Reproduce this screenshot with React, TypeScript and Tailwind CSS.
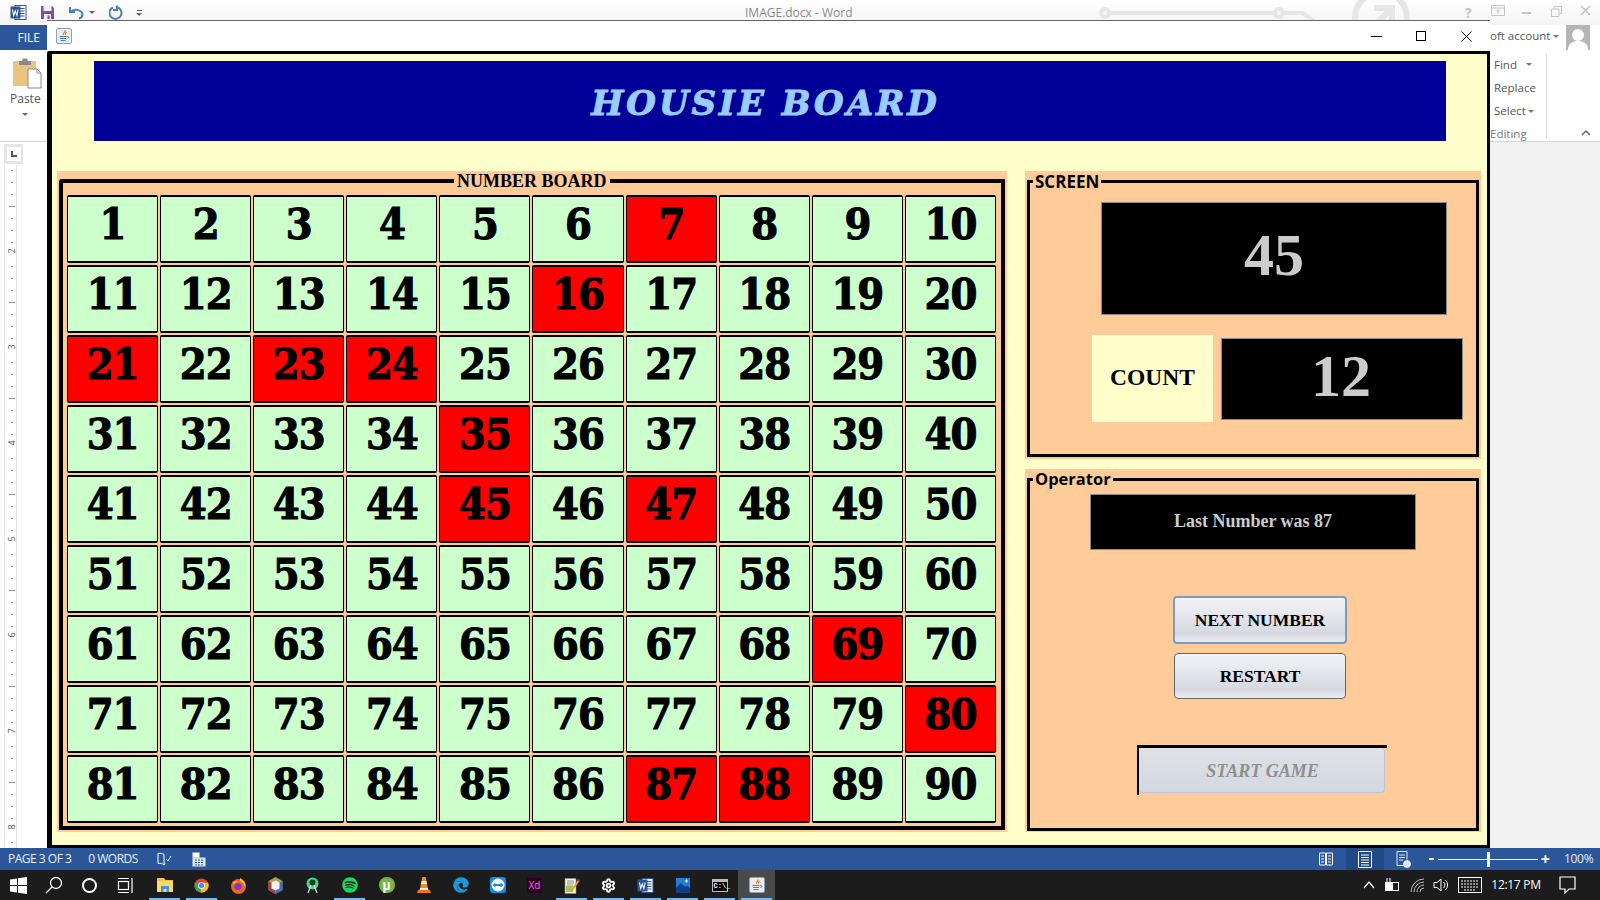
import React from 'react';
import { FaSpotify, FaEdge } from 'react-icons/fa';
import { Settings } from 'lucide-react';

const SERIF = "font-['Liberation_Serif',serif]";
const UI = "font-['Open_Sans','Noto_Sans',sans-serif]";

// numbers already called in the game
const called = [7, 16, 21, 23, 24, 35, 45, 47, 69, 80, 87, 88];
const numbers = Array.from({ length: 90 }, (_, i) => i + 1);

const WordIcon: React.FC<{ size?: number }> = ({ size = 17 }) => (
  <svg width={size} height={size} viewBox="0 0 17 17">
    <rect x="5" y="1.5" width="11" height="14" fill="#fff" stroke="#2b579a" />
    <path d="M10 4.5h4.5M10 7h4.5M10 9.5h4.5M10 12h4.5" stroke="#2b579a" />
    <rect x="0.5" y="2.5" width="10" height="12" fill="#2b579a" />
    <path d="M2.5 5.5l1.2 6 1.6-4.5 1.6 4.5 1.2-6" fill="none" stroke="#fff" strokeWidth="1.1" />
  </svg>
);

const JavaIcon: React.FC = () => (
  <svg width="16" height="16" viewBox="0 0 16 16">
    <rect x="0.5" y="0.5" width="15" height="15" rx="1.5" fill="#e9eef3" stroke="#8fa3b5" />
    <path d="M9 2.5c1 1.5-2.5 2.5-1.5 4.5M10.5 4c-1.2 1-1.5 1.8-1 3" fill="none" stroke="#e76f00" strokeWidth="1.1" />
    <path d="M3.5 8.5h7M4 10.5h6M4.5 12.5h5" stroke="#4f7fa3" strokeWidth="1.1" />
    <path d="M11 8.5c2-.5 2.5 1.5.5 2" fill="none" stroke="#4f7fa3" />
  </svg>
);

const TitleDecor: React.FC = () => (
  <svg className="absolute left-[1096px] top-0" width="400" height="25" viewBox="0 0 400 25">
    <g fill="none" stroke="#e6e6e6" strokeWidth="4">
      <circle cx="9" cy="13" r="4" />
      <path d="M13 13h166" />
      <circle cx="183" cy="13" r="4" />
      <path d="M187 13h20l16 12" />
      <circle cx="285" cy="18" r="26" strokeWidth="6" />
      <path d="M272 32l24-24M278 8h18v18" strokeWidth="6" />
    </g>
  </svg>
);

const QuickAccess: React.FC = () => (
  <div className="flex items-center h-full pl-[10px]">
    <WordIcon />
    <svg className="ml-[13px]" width="15" height="15" viewBox="0 0 15 15">
      <path d="M1 1h11l2 2v11H1z" fill="#7d4f9e" />
      <rect x="3.5" y="1" width="8" height="5" fill="#f3eef7" />
      <rect x="4" y="9" width="7" height="5" fill="#f3eef7" />
      <rect x="7.5" y="10.5" width="2" height="3.5" fill="#7d4f9e" />
    </svg>
    <svg className="ml-[13px]" width="17" height="15" viewBox="0 0 17 15">
      <path d="M2 2v5h5M2.5 7c3-3.5 11-3 12 2.5 0 2-1.5 3.500-3.500 4" fill="none" stroke="#4a7fb5" strokeWidth="2" />
    </svg>
    <span className="ml-[4px] w-0 h-0 border-x-[3px] border-x-transparent border-t-[3px] border-t-[#666]" />
    <svg className="ml-[14px]" width="14" height="15" viewBox="0 0 14 15">
      <path d="M4 2.500a6 6 0 1 0 5 0M8 .5v4.500h-4" fill="none" stroke="#4a7fb5" strokeWidth="2" />
    </svg>
    <span className="ml-[13px] flex flex-col items-center gap-[2px]">
      <span className="w-[5px] h-px bg-[#666]" />
      <span className="w-0 h-0 border-x-[3px] border-x-transparent border-t-[3px] border-t-[#666]" />
    </span>
  </div>
);

const Ruler: React.FC = () => {
  const ticks = Array.from({ length: 57 }, (_, i) => 170 + i * 12).filter((y) => (y - 158) % 96 !== 0);
  return (
    <svg width="24" height="706" viewBox="0 142 24 706" className="absolute left-0 top-0">
      <path d="M4.500 165V848M16.500 165V848" stroke="#e4e4e4" />
      {ticks.map((y) => (
        <rect key={y} x={(y - 158) % 48 === 0 ? 9 : 11} y={y} width={(y - 158) % 48 === 0 ? 6 : 2} height="1" fill="#8a8a8a" />
      ))}
      {[2, 3, 4, 5, 6, 7, 8].map((n) => (
        <text key={n} x="12" y={62 + n * 96} fontSize="9" fill="#555" textAnchor="middle" fontFamily="Open Sans" transform={`rotate(-90 12 ${59 + n * 96})`}>
          {n}
        </text>
      ))}
    </svg>
  );
};

const Legend: React.FC<{ className: string; children: React.ReactNode }> = ({ className, children }) => (
  <span className={`absolute bg-[#FFCC99] text-black font-bold leading-none ${className}`}>{children}</span>
);

const NumberCell: React.FC<{ n: number }> = ({ n }) => (
  <div
    className={`h-[68px] flex items-center justify-center pb-[9px] border border-t-2 border-b-2 border-black rounded-[2px] text-[43px] font-bold leading-none text-black [font-stretch:condensed] tracking-[-1px] [-webkit-text-stroke:1px_#000] font-['DejaVu_Serif',serif] ${
      called.includes(n) ? 'bg-[#FF0000]' : 'bg-[#CCFFCC]'
    }`}
  >
    {n}
  </div>
);

const ChromeButton: React.FC<{ className: string; children: React.ReactNode }> = ({ className, children }) => (
  <div
    className={`flex items-center justify-center rounded-[4px] bg-gradient-to-b from-[#f3f4f7] via-[#d6d9e1] via-80% to-[#e9ebef] text-[17.5px] font-bold text-black ${SERIF} ${className}`}
  >
    {children}
  </div>
);

const ExplorerIcon = () => (
  <svg width="18" height="16" viewBox="0 0 18 16">
    <path d="M1 1h7l1.500 2H17v12H1z" fill="#f0c24a" />
    <path d="M1 4h16v11H1z" fill="#ffd968" />
    <path d="M5 9h8v6h-2.500v-3h-3v3H5z" fill="#3f9be0" />
  </svg>
);

const ChromeIcon = () => (
  <svg width="15" height="15" viewBox="0 0 16 16">
    <circle cx="8" cy="8" r="7.500" fill="#d9483b" />
    <path d="M8 8L1.300 4.500A7.500 7.500 0 0 0 7 15.400z" fill="#3aa757" />
    <path d="M8 5h7a7.500 7.500 0 0 1-8 10.400z" fill="#f4c20d" />
    <circle cx="8" cy="8" r="3.600" fill="#fff" />
    <circle cx="8" cy="8" r="2.700" fill="#4285f4" />
  </svg>
);

const FirefoxIcon = () => (
  <svg width="17" height="17" viewBox="0 0 17 17">
    <circle cx="8.500" cy="9.500" r="7.500" fill="#f2651f" />
    <path d="M10 1c4 2 6 5 5 9-1-4-3-5-5-6z" fill="#ffbd2e" />
    <circle cx="8" cy="9.500" r="3.600" fill="#7a3bc4" />
    <path d="M2 6c2-2 4-2 6-1-2 0-3 1-3 2z" fill="#ffa436" />
  </svg>
);

const HexIcon = () => (
  <svg width="15" height="17" viewBox="0 0 15 17">
    <path d="M7.500 0L14.500 4v9l-7 4-7-4V4z" fill="#b0a04a" />
    <path d="M14.500 4v9l-7 4V8.500z" fill="#3f6fc0" />
    <path d="M.5 4v9l7 4V8.500z" fill="#a83a5a" />
    <path d="M3.500 5.500l4-2 4 2v6l-4 2-4-2z" fill="#f2f2f2" />
  </svg>
);

const AndroidStudioIcon = () => (
  <svg width="13" height="17" viewBox="0 0 13 17">
    <circle cx="6.500" cy="6.500" r="6" fill="#3ddc84" />
    <circle cx="6.500" cy="5.500" r="3" fill="#0b3d2a" />
    <path d="M5 8L2 16M8 8l3 8" stroke="#e8e8e8" strokeWidth="1.200" />
  </svg>
);

const TorrentIcon = () => (
  <div className="w-[16px] h-[16px] rounded-full bg-[#76b83f] flex items-center justify-center text-white text-[14px] font-bold leading-none font-['Liberation_Sans',sans-serif]">µ</div>
);

const VlcIcon = () => (
  <svg width="14" height="16" viewBox="0 0 14 16">
    <path d="M5.500 0h3l1 4h-5z" fill="#f28c1e" />
    <path d="M4.500 4h5l.6 3H3.900z" fill="#eee" />
    <path d="M3.900 7h6.200l.8 4H3.100z" fill="#f28c1e" />
    <path d="M3.100 11h7.800l.6 2h-9z" fill="#eee" />
    <path d="M1 13h12l1 3H0z" fill="#e8771a" />
  </svg>
);

const TeamViewerIcon = () => (
  <svg width="16" height="16" viewBox="0 0 16 16">
    <rect width="16" height="16" rx="3" fill="#0e8ee9" />
    <circle cx="8" cy="8" r="6.500" fill="#fff" />
    <path d="M2.500 8l3-2.500V7h5V5.500l3 2.500-3 2.500V9h-5v1.500z" fill="#0e8ee9" />
  </svg>
);

const XdIcon = () => (
  <div className={`w-[15px] h-[15px] bg-[#2e001f] flex items-center justify-center text-[#ff61f6] text-[10px] leading-none ${UI}`}>Xd</div>
);

const NotepadIcon = () => (
  <svg width="16" height="17" viewBox="0 0 16 17">
    <path d="M1 1.500h11v15H1z" fill="#f5f5e6" stroke="#888" strokeWidth="0.6" />
    <path d="M3 4h7M3 6h7M3 8h6" stroke="#666" strokeWidth="0.7" />
    <path d="M2 9h7v6H2z" fill="#9ccc4d" />
    <path d="M6 14L14 3l1.500 1L8 15z" fill="#f0a030" />
    <path d="M14 2l2 1-1 1.500-1.500-1z" fill="#c0303a" />
  </svg>
);

const PhotosIcon = () => (
  <svg width="14" height="15" viewBox="0 0 14 15">
    <rect width="14" height="15" fill="#1f7fd8" />
    <path d="M0 15V10l5-5 4 4 2-1.500 3 3V15z" fill="#0d3f8c" />
    <path d="M10.500 1.500v3M9 3h3" stroke="#fff" />
  </svg>
);

const CmdIcon = () => (
  <div className="w-[16px] h-[13px] border border-[#bbb] bg-black flex flex-col">
    <span className="h-[2px] bg-[#bbb]" />
    <span className="text-white text-[7px] leading-[9px] font-bold font-['Liberation_Mono',monospace] pl-px">C:\_</span>
  </div>
);

// task buttons sit on a 37px pitch
const taskIcons: { key: string; node: React.ReactNode; bar?: boolean }[] = [
  { key: 'explorer', node: <ExplorerIcon />, bar: true },
  { key: 'chrome', node: <ChromeIcon />, bar: true },
  { key: 'firefox', node: <FirefoxIcon /> },
  { key: 'hex', node: <HexIcon /> },
  { key: 'studio', node: <AndroidStudioIcon /> },
  { key: 'spotify', node: <FaSpotify size={16} color="#1ed760" />, bar: true },
  { key: 'torrent', node: <TorrentIcon /> },
  { key: 'vlc', node: <VlcIcon /> },
  { key: 'edge', node: <FaEdge size={16} color="#1a9ad6" /> },
  { key: 'teamviewer', node: <TeamViewerIcon /> },
  { key: 'xd', node: <XdIcon /> },
  { key: 'notepad', node: <NotepadIcon />, bar: true },
  { key: 'gear', node: <Settings size={15} color="#fff" strokeWidth={3} />, bar: true },
  { key: 'word', node: <WordIcon />, bar: true },
  { key: 'photos', node: <PhotosIcon />, bar: true },
  { key: 'cmd', node: <CmdIcon />, bar: true },
  { key: 'java', node: <JavaIcon />, bar: true },
];

const Taskbar: React.FC = () => (
  <div className="h-[30px] bg-[#1c1c1c] flex items-center text-white">
    <div className="w-[36px] flex justify-center">
      <svg width="17" height="17" viewBox="0 0 17 17" fill="#fff">
        <path d="M0 2.500l7-1v6.500H0zM8 1.300L17 0v8H8zM0 9h7v6.500l-7-1zM8 9h9v8l-9-1.300z" />
      </svg>
    </div>
    <div className="w-[36px] flex justify-center">
      <svg width="18" height="18" viewBox="0 0 18 18" fill="none" stroke="#fff" strokeWidth="1.300">
        <circle cx="11" cy="7" r="5.500" />
        <path d="M7 11l-6 6" />
      </svg>
    </div>
    <div className="w-[35px] flex justify-center">
      <span className="w-[15px] h-[15px] rounded-full border-2 border-white" />
    </div>
    <div className="w-[36px] flex justify-center">
      <svg width="17" height="17" viewBox="0 0 17 17" fill="none" stroke="#fff" strokeWidth="1.200">
        <rect x="1.500" y="4.500" width="10" height="8" />
        <path d="M1 1.500h11M1 15.500h11M15 1v15" />
      </svg>
    </div>
    <div className="flex ml-[3px] h-full">
      {taskIcons.map((t) => (
        <div key={t.key} className={`relative w-[37px] flex items-center justify-center ${t.key === 'java' ? 'bg-[#4a4a4a]' : ''}`}>
          {t.node}
          {t.bar && <span className="absolute left-[3px] right-[3px] bottom-0 h-[2px] bg-[#76b9ed]" />}
        </div>
      ))}
    </div>
    <div className="ml-auto flex items-center h-full">
      <svg width="12" height="8" viewBox="0 0 12 8" fill="none" stroke="#fff" strokeWidth="1.200" className="mr-[9px]">
        <path d="M1 7l5-6 5 6" />
      </svg>
      <svg width="16" height="14" viewBox="0 0 16 14" fill="none" stroke="#fff" className="mr-[10px]">
        <rect x="1.500" y="4.500" width="13" height="8" />
        <rect x="1.500" y="4.500" width="7" height="8" fill="#fff" />
        <path d="M3 0v4M6 0v4" />
      </svg>
      <svg width="15" height="15" viewBox="0 0 15 15" fill="none" stroke="#bbb" className="mr-[8px]">
        <path d="M1 14A13 13 0 0 1 14 1M4 14A10 10 0 0 1 14 4M7 14a7 7 0 0 1 7-7M10 14a4 4 0 0 1 4-4" />
      </svg>
      <svg width="16" height="16" viewBox="0 0 16 16" fill="none" stroke="#fff" className="mr-[9px]">
        <path d="M1 5.500h3l4-3.500v12l-4-3.500H1zM10.500 5a4 4 0 0 1 0 6M12.500 3a7 7 0 0 1 0 10" />
      </svg>
      <svg width="24" height="16" viewBox="0 0 24 16" fill="none" stroke="#fff" className="mr-[9px]">
        <rect x="0.500" y="0.500" width="23" height="15" />
        <path d="M3 4h18M3 7h18M3 10h18M6 13h12" strokeDasharray="2 1" />
      </svg>
      <span className={`text-[12px] tracking-[-0.3px] w-[50px] text-center whitespace-nowrap ${UI}`}>12:17 PM</span>
      <svg width="17" height="18" viewBox="0 0 17 18" fill="none" stroke="#fff" strokeWidth="1.200" className="ml-[18px] mr-[24px]">
        <path d="M1 1h15v12h-6l-4 4v-4H1z" />
      </svg>
    </div>
  </div>
);

const StatusBar: React.FC = () => (
  <div className={`h-[22px] bg-[#2B579A] flex items-center text-[12px] text-[#e8edf5] ${UI}`}>
    <span className="ml-[8px] tracking-[-0.5px]">PAGE 3 OF 3</span>
    <span className="ml-[17px] tracking-[-0.5px]">0 WORDS</span>
    <svg className="ml-[19px]" width="15" height="15" viewBox="0 0 15 15" fill="none" stroke="#fff">
      <path d="M7 2.500C5.500 1.500 3 1 1 1.500v10c2-.5 4.500 0 6 1.500zM7 13l1-1.500M9 7l2 2 3-5" />
    </svg>
    <svg className="ml-[20px]" width="14" height="15" viewBox="0 0 14 15">
      <rect x="0.500" y="5.500" width="13" height="9" fill="#dfe6f1" />
      <rect x="0.500" y="0.500" width="7" height="5" fill="#fff" />
      <path d="M3 8h8M3 10.500h8M3 13h8" stroke="#2B579A" strokeDasharray="2 1" />
    </svg>
    <div className="ml-auto flex items-center h-full">
      <svg width="16" height="15" viewBox="0 0 16 15" fill="none" stroke="#fff">
        <path d="M1.500 1h6v12h-6zM8.500 1h6v12h-6zM3 4h3M3 7h3M3 10h3M10 4h3M10 7h3M10 10h3" />
      </svg>
      <div className="ml-[12px] w-[38px] h-full bg-[#1f4a85] flex items-center justify-center">
        <svg width="14" height="17" viewBox="0 0 14 17" fill="none" stroke="#fff">
          <path d="M.5.500h13v16H.5zM3 4h8M3 6.500h8M3 9h8M3 11.500h8M3 14h8" />
        </svg>
      </div>
      <svg className="ml-[12px]" width="15" height="17" viewBox="0 0 15 17" fill="none" stroke="#dfe6f1">
        <path d="M8 14.500H1V.500h10v8M3 4h6M3 6.500h6M3 9h4" />
        <circle cx="11" cy="13" r="3.500" fill="#dfe6f1" />
      </svg>
      <span className="ml-[18px] w-[5px] h-[2px] bg-white" />
      <div className="relative ml-[4px] w-[100px] h-px bg-white">
        <span className="absolute left-[49px] -top-[7px] w-[3px] h-[15px] bg-white" />
      </div>
      <span className="ml-[3px] text-[16px] leading-none font-bold text-white">+</span>
      <span className="ml-[14px] mr-[8px] w-[28px] tracking-[-0.3px]">100%</span>
    </div>
  </div>
);

const HousieWindow: React.FC = () => (
  <div className="absolute left-[47px] top-[20px] w-[1443px] h-[828px] flex flex-col bg-white border-t border-[#666]">
    <div className="h-[30px] shrink-0 flex items-center">
      <div className="ml-[9px]">
        <JavaIcon />
      </div>
      <div className="ml-auto flex items-center">
        <span className="w-[11px] h-px bg-black" />
        <span className="ml-[34px] w-[10px] h-[10px] border border-black" />
        <svg className="ml-[35px] mr-[18px]" width="11" height="11" viewBox="0 0 11 11" stroke="#000" strokeWidth="1">
          <path d="M.5.500l10 10M10.500.500l-10 10" />
        </svg>
      </div>
    </div>
    <div className="flex-1 min-h-0 border-[3px] border-l-[5px] border-black rounded-tl-[2px] bg-[#FFFFCC] flex flex-col">
      <div className="mt-[7px] ml-[42px] w-[1352px] h-[80px] shrink-0 bg-[#000099] flex items-center justify-center pr-[9px] pt-[3px]">
        <span className="text-[#99CCFF] text-[34px] font-bold italic tracking-[3px] leading-none whitespace-nowrap font-['DejaVu_Serif',serif] [-webkit-text-stroke:1px_#99CCFF]">
          HOUSIE BOARD
        </span>
      </div>
      <div className="mt-[30px] ml-[5px] flex gap-[18px]">
        {/* number board */}
        <div className="w-[950px] h-[661px] bg-[#FFCC99] px-[2px] pt-[8px]">
          <div className="relative w-[946px] h-[651px] border-4 border-black rounded-tl-[3px] pl-[4px] pt-[12px]">
            <Legend className={`left-[391px] -top-[11px] px-[3px] text-[18px] ${SERIF}`}>NUMBER BOARD</Legend>
            <div className="w-[929px] grid grid-cols-10 gap-[2px]">
              {numbers.map((n) => (
                <NumberCell key={n} n={n} />
              ))}
            </div>
          </div>
        </div>
        <div className="w-[456px] flex flex-col gap-[10px]">
          {/* screen */}
          <div className="h-[288px] bg-[#FFCC99] px-[2px] pt-[9px]">
            <div className="relative h-[277px] border-[3px] border-black flex flex-col items-start">
              <Legend className={`left-[3px] -top-[10px] px-[2px] text-[17px] ${UI}`}>SCREEN</Legend>
              <div className={`mt-[19px] ml-[71px] w-[346px] h-[113px] bg-black border border-[#888] flex items-center justify-center pb-[7px] text-[60px] font-bold text-[#CCCCCC] ${SERIF}`}>
                45
              </div>
              <div className="mt-[20px] ml-[62px] flex items-center gap-[8px]">
                <div className={`w-[121px] h-[87px] bg-[#FFFFCC] flex items-center justify-center pb-[2px] text-[23.5px] font-bold text-black ${SERIF}`}>COUNT</div>
                <div className={`w-[242px] h-[82px] bg-black border border-[#888] flex items-center justify-center pb-[6px] pr-[2px] text-[60px] font-bold text-[#CCCCCC] ${SERIF}`}>12</div>
              </div>
            </div>
          </div>
          {/* operator */}
          <div className="h-[363px] bg-[#FFCC99] px-[2px] pt-[9px]">
            <div className="relative h-[353px] border-[3px] border-black flex flex-col items-start">
              <Legend className={`left-[3px] -top-[10px] px-[2px] text-[16.500px] ${UI}`}>Operator</Legend>
              <div className={`mt-[13px] ml-[60px] w-[326px] h-[56px] bg-black border border-[#888] flex items-center justify-center pb-[2px] text-[18px] font-bold text-[#CCCCCC] ${SERIF}`}>
                Last Number was 87
              </div>
              <ChromeButton className="mt-[46px] ml-[143px] w-[174px] h-[48px] border-2 border-[#7a9cc0]">NEXT NUMBER</ChromeButton>
              <ChromeButton className="mt-[9px] ml-[144px] w-[172px] h-[46px] border border-[#666]">RESTART</ChromeButton>
              <div className="mt-[46px] ml-[107px] w-[250px] h-[50px] border-t-[3px] border-l-2 border-black">
                <div className={`w-[246px] h-[45px] rounded-[4px] bg-gradient-to-b from-[#dfe1e7] to-[#d4d8e1] border-r border-b border-[#bcc6d6] flex items-center justify-center pl-[2px] pt-[3px] text-[18px] font-bold italic text-[#8f8f8f] ${SERIF}`}>
                  START GAME
                </div>
              </div>
            </div>
          </div>
        </div>
      </div>
    </div>
  </div>
);

// sits below the FILE row, so its tops are counted from y=50
const Ribbon: React.FC = () => (
  <div className={`relative h-[92px] shrink-0 bg-white border-b border-[#d4d4d4] ${UI}`}>
    <div className="absolute left-[13px] top-[8px]">
      <svg width="29" height="31" viewBox="0 0 29 31">
        <rect x="0" y="3" width="23" height="25" rx="1" fill="#e9c57f" />
        <path d="M6 3h3l1-2.500h4L15 3h3v4H6z" fill="#8a8a8a" />
        <path d="M15 11h9l4 4v15H15z" fill="#fff" stroke="#8a8a8a" />
        <path d="M24 11v4h4" fill="none" stroke="#8a8a8a" />
      </svg>
    </div>
    <span className="absolute left-[10px] top-[40px] text-[12px] text-[#555]">Paste</span>
    <span className="absolute left-[22px] top-[63px] w-0 h-0 border-x-[3px] border-x-transparent border-t-[3px] border-t-[#666]" />
    <div className="absolute left-[1494px] top-[9px] text-[11.500px] text-[#555] leading-none">Find</div>
    <span className="absolute left-[1526px] top-[13px] w-0 h-0 border-x-[3px] border-x-transparent border-t-[3px] border-t-[#777]" />
    <div className="absolute left-[1494px] top-[32px] text-[11.500px] text-[#555] leading-none">Replace</div>
    <div className="absolute left-[1494px] top-[55px] text-[11.500px] text-[#555] leading-none">Select</div>
    <span className="absolute left-[1528px] top-[60px] w-0 h-0 border-x-[3px] border-x-transparent border-t-[3px] border-t-[#777]" />
    <div className="absolute left-[1490px] top-[78px] text-[11.500px] text-[#777] leading-none">Editing</div>
    <span className="absolute left-[1546px] top-[4px] w-px h-[84px] bg-[#ddd]" />
    <svg className="absolute left-[1581px] top-[80px]" width="10" height="6" viewBox="0 0 10 6" fill="none" stroke="#666" strokeWidth="1.500">
      <path d="M1 5l4-4 4 4" />
    </svg>
  </div>
);

export default function App() {
  return (
    <div className="relative w-[1600px] h-[900px] overflow-hidden flex flex-col bg-white">
      <div className="relative h-[25px] shrink-0 bg-gradient-to-b from-white to-[#f4f4f4]">
        <QuickAccess />
        <TitleDecor />
        <span className={`absolute left-[745px] top-[4px] text-[12px] text-[#8a8a8a] ${UI}`}>IMAGE.docx - Word</span>
        <span className={`absolute left-[1465px] top-[2px] text-[14px] font-bold text-[#c4c4c4] ${UI}`}>?</span>
        <svg className="absolute left-[1491px] top-[5px]" width="14" height="12" viewBox="0 0 14 12" fill="none" stroke="#c4c4c4">
          <path d="M.5.500h13v10H.5zM.5 3h13M7 9V5M5 6.500L7 4.500l2 2" />
        </svg>
        <span className="absolute left-[1522px] top-[12px] w-[9px] h-[2px] bg-[#c4c4c4]" />
        <svg className="absolute left-[1551px] top-[6px]" width="11" height="11" viewBox="0 0 11 11" fill="none" stroke="#c4c4c4">
          <path d="M3 2.500V.500h7.500v7H8.500M.5 3h7.500v7.500H.5z" />
        </svg>
        <svg className="absolute left-[1580px] top-[5px]" width="11" height="11" viewBox="0 0 11 11" stroke="#c4c4c4" strokeWidth="1.600">
          <path d="M1 1l9 9M10 1l-9 9" />
        </svg>
      </div>
      <div className="relative h-[25px] shrink-0 bg-white flex items-center">
        <div className={`w-[47px] h-full bg-[#2B579A] text-white text-[12px] flex items-center justify-end pr-[7px] ${UI}`}>FILE</div>
        <span className={`absolute left-[1490px] top-[1px] text-[11.500px] leading-[20px] text-[#555] ${UI}`}>oft account</span>
        <span className="absolute left-[1553px] top-[10px] w-0 h-0 border-x-[3px] border-x-transparent border-t-[3px] border-t-[#777]" />
        <svg className="absolute left-[1566px] top-0" width="24" height="25" viewBox="0 0 24 25">
          <rect width="24" height="25" fill="#b5b5b5" />
          <circle cx="12" cy="10" r="6" fill="#fff" />
          <path d="M2 25c0-7 5-9 10-9s10 2 10 9z" fill="#fff" />
        </svg>
      </div>
      <Ribbon />
      <div className="relative flex-1 min-h-0 flex bg-white">
        <div className="relative w-[47px]">
          <Ruler />
          <div className="absolute left-[4px] top-[2px] w-[19px] h-[20px] bg-[#e6e6e6] flex items-center justify-center">
            <div className="w-[14px] h-[14px] bg-white flex items-center justify-center">
              <span className="w-[6px] h-[6px] border-l-2 border-b-2 border-[#555]" />
            </div>
          </div>
        </div>
        <div className="flex-1 bg-gradient-to-r from-white via-[#f5f5f5] to-[#f1f1f1]" />
      </div>
      <StatusBar />
      <Taskbar />
      <HousieWindow />
    </div>
  );
}
